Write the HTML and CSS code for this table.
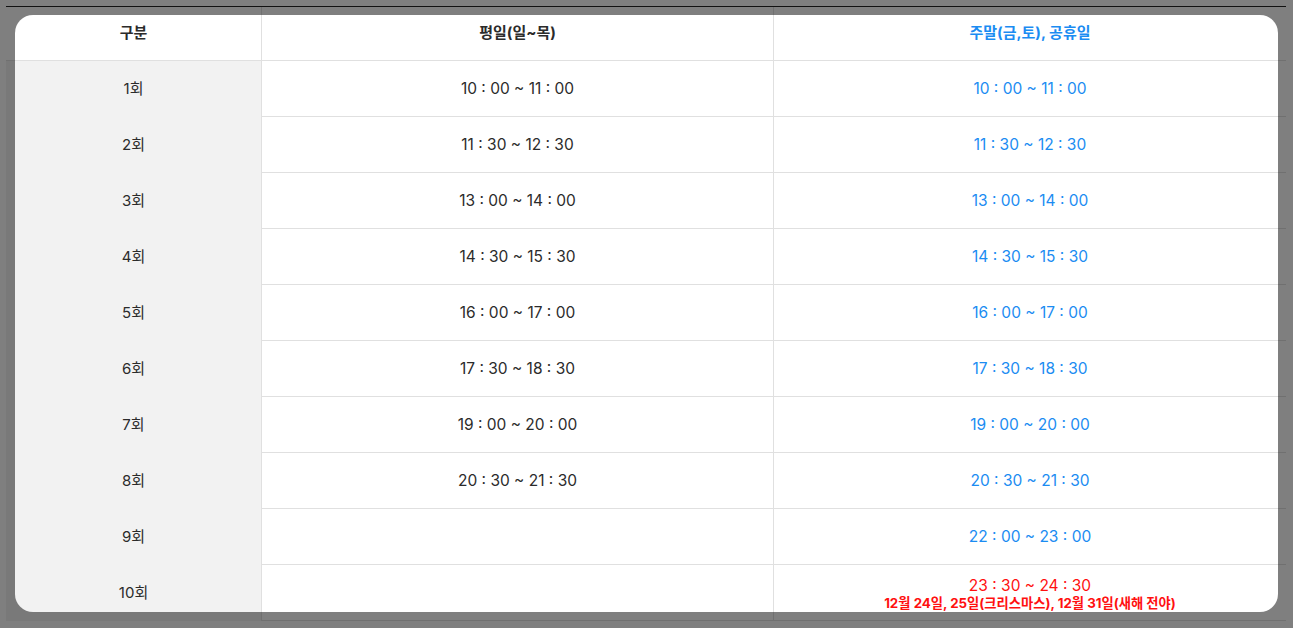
FILE: index.html
```html
<!DOCTYPE html>
<html lang="ko">
<head>
<meta charset="utf-8">
<title>운영 시간</title>
<link rel="stylesheet" href="styles.css">
</head>
<body>
<div class="page">
  <div class="schedule">
    <div class="cell head first">구분</div>
    <div class="cell head">평일(일~목)</div>
    <div class="cell head blue">주말(금,토), 공휴일</div>

    <div class="cell first">1회</div>
    <div class="cell">10 : 00 ~ 11 : 00</div>
    <div class="cell blue">10 : 00 ~ 11 : 00</div>

    <div class="cell first">2회</div>
    <div class="cell">11 : 30 ~ 12 : 30</div>
    <div class="cell blue">11 : 30 ~ 12 : 30</div>

    <div class="cell first">3회</div>
    <div class="cell">13 : 00 ~ 14 : 00</div>
    <div class="cell blue">13 : 00 ~ 14 : 00</div>

    <div class="cell first">4회</div>
    <div class="cell">14 : 30 ~ 15 : 30</div>
    <div class="cell blue">14 : 30 ~ 15 : 30</div>

    <div class="cell first">5회</div>
    <div class="cell">16 : 00 ~ 17 : 00</div>
    <div class="cell blue">16 : 00 ~ 17 : 00</div>

    <div class="cell first">6회</div>
    <div class="cell">17 : 30 ~ 18 : 30</div>
    <div class="cell blue">17 : 30 ~ 18 : 30</div>

    <div class="cell first">7회</div>
    <div class="cell">19 : 00 ~ 20 : 00</div>
    <div class="cell blue">19 : 00 ~ 20 : 00</div>

    <div class="cell first">8회</div>
    <div class="cell">20 : 30 ~ 21 : 30</div>
    <div class="cell blue">20 : 30 ~ 21 : 30</div>

    <div class="cell first">9회</div>
    <div class="cell"></div>
    <div class="cell blue">22 : 00 ~ 23 : 00</div>

    <div class="cell first">10회</div>
    <div class="cell"></div>
    <div class="cell red stack">
      <span class="time">23 : 30 ~ 24 : 30</span>
      <span class="note">12월 24일, 25일(크리스마스), 12월 31일(새해 전야)</span>
    </div>
  </div>
</div>
<div class="spotlight"></div>
</body>
</html>
```

FILE: styles.css
```css
html, body {
  margin: 0;
  padding: 0;
  background: #ffffff;
}

body {
  font-family: "Inter", "Noto Sans CJK KR", sans-serif;
  color: #2b2b2b;
  overflow: hidden;
}

.page {
  padding: 6px;
}

.schedule {
  width: 1280px;
  display: grid;
  grid-template-columns: 256px 512px 512px;
  grid-auto-rows: 56px;
  grid-template-rows: 54px;
  border-top: 1px solid #222222;
}

.cell {
  box-sizing: border-box;
  display: flex;
  align-items: center;
  justify-content: center;
  font-size: 15.5px;
  padding-bottom: 1px;
  border-bottom: 1px solid #e0e0e0;
  border-right: 1px solid #e0e0e0;
}

.cell:nth-child(3n) {
  border-right: none;
}

.head {
  font-size: 15px;
  font-weight: 700;
  background: #ffffff;
  padding-bottom: 4px;
}

.first {
  background: #f2f2f2;
  border-bottom: none;
  font-size: 15px;
  padding-bottom: 3px;
}

.head.first {
  background: #ffffff;
  border-bottom: 1px solid #e0e0e0;
  padding-bottom: 4px;
}

.blue {
  color: #1b8cf2;
}

.red {
  color: #ff1010;
}

.stack {
  flex-direction: column;
  justify-content: flex-start;
  padding-top: 11px;
  padding-bottom: 0;
}

.time {
  font-size: 15.5px;
  line-height: 19px;
}

.note {
  font-size: 13.3px;
  font-weight: 700;
  line-height: 16px;
}

.spotlight {
  position: absolute;
  left: 15px;
  top: 15px;
  width: 1263px;
  height: 597px;
  border-radius: 18px;
  box-shadow: 0 0 0 3000px rgba(0, 0, 0, 0.5);
  pointer-events: none;
}
```
